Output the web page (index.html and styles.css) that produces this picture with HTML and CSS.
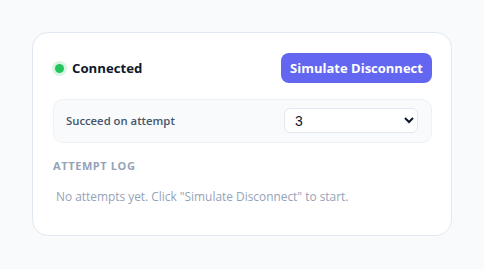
FILE: index.html
```html
<!DOCTYPE html>
<html>
<head>
<meta charset="utf-8">
<link rel="stylesheet" href="styles.css">
</head>
<body>
<div class="card">
  <div class="header">
    <div class="status"><span class="dot"></span><span class="status-text">Connected</span></div>
    <button class="btn">Simulate Disconnect</button>
  </div>
  <div class="setting">
    <label class="setting-label">Succeed on attempt</label>
    <select class="select">
      <option>1</option><option>2</option><option selected>3</option><option>4</option>
    </select>
  </div>
  <div class="log-title">ATTEMPT LOG</div>
  <div class="log-empty">No attempts yet. Click "Simulate Disconnect" to start.</div>
</div>
</body>
</html>
```
FILE: styles.css
```css
html, body { margin: 0; }
body {
  background: #f8fafc;
  padding: 32px;
  font-family: "Open Sans", sans-serif;
}
.card {
  width: 379px;
  background: #fff;
  border: 1px solid #e2e8f0;
  border-radius: 16px;
  padding: 20px 19px 31px 20px;
}
.header {
  display: flex;
  align-items: center;
  justify-content: space-between;
}
.status { display: flex; align-items: center; gap: 8px; }
.dot {
  width: 9px; height: 9px; border-radius: 50%;
  background: #22c55e;
  box-shadow: 0 0 0 3px rgba(34,197,94,0.18);
  margin-left: 2px;
}
.status-text { font-weight: 700; font-size: 13.2px; color: #0f172a; }
.btn {
  height: 30px;
  width: 151px;
  padding: 0;
  border: none;
  border-radius: 8px;
  background: #6366f1;
  color: #fff;
  font-family: "Open Sans", sans-serif;
  font-weight: 700;
  font-size: 13px;
}
.setting {
  margin-top: 16px;
  display: flex;
  align-items: center;
  justify-content: space-between;
  background: #f8fafc;
  border: 1px solid #eef2f6;
  border-radius: 10px;
  padding: 8px 13px 9px 12px;
}
.setting-label { font-size: 11.3px; font-weight: 600; color: #475569; }
.select {
  width: 134px; height: 25px;
  border: 1px solid #e2e8f0;
  border-radius: 6px;
  background: #fff;
  font-family: "Liberation Sans", Arial, sans-serif;
  font-size: 14px;
  color: #0f172a;
  padding: 0 6px;
}
.log-title {
  margin-top: 15px;
  font-size: 11px;
  font-weight: 700;
  letter-spacing: 0.6px;
  color: #94a3b8;
}
.log-empty {
  margin-top: 15px;
  padding-left: 3px;
  font-size: 11.9px;
  color: #94a3b8;
}
```
